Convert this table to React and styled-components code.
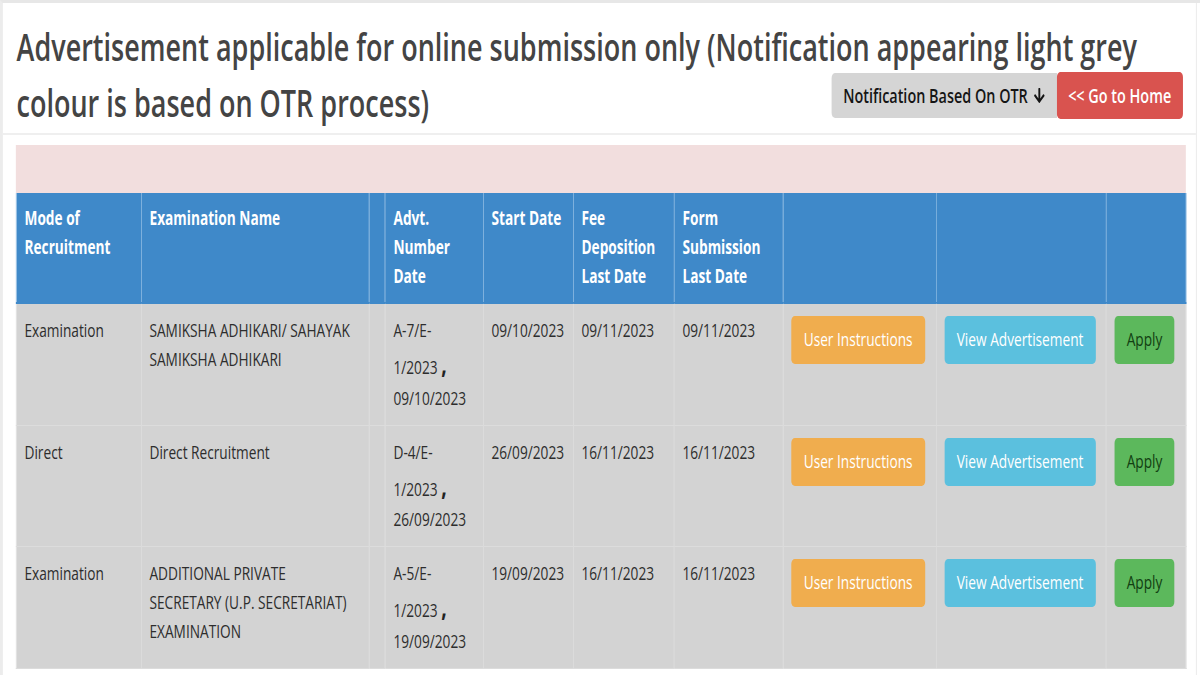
import React from 'react'
import styled, { createGlobalStyle } from 'styled-components'
import { FaArrowDown } from 'react-icons/fa'

// the reference is a horizontally squeezed screenshot, so the page is laid out
// wide and then squeezed with scaleX
const SQUEEZE = 0.72

const GlobalStyle = createGlobalStyle`
  html, body {
    margin: 0;
    padding: 0;
    overflow: hidden;
    background: #fff;
  }
  body {
    font-family: "Open Sans", "Noto Sans", sans-serif;
    color: #333;
  }
  * {
    box-sizing: border-box;
  }
`

const Page = styled.div`
  width: ${1200 / SQUEEZE}px;
  height: 675px;
  transform: scaleX(${SQUEEZE});
  transform-origin: 0 0;
  border-top: 3px solid #e7e7e7;
  border-left: 4px solid #ececec;
  background: #fff;
`

const Panel = styled.div`
  margin-right: 5px;
  border-right: 1px solid #e4e4e4;
  height: 100%;
`

const Heading = styled.h2`
  margin: 0;
  padding: 16px 18px 2px 19px;
  font-size: 37.5px;
  line-height: 56px;
  font-weight: 600;
  color: #444;
  border-bottom: 2px solid #efefef;
  &::after {
    content: "";
    display: block;
    clear: both;
  }
`

const HeadActions = styled.span`
  float: right;
  display: flex;
  margin-top: -2px;
`

const HeadButton = styled.a`
  display: inline-flex;
  align-items: center;
  gap: 7px;
  height: 45px;
  padding: 0 16px;
  font-size: 20px;
  line-height: 29px;
  font-weight: 600;
  text-decoration: none;
  cursor: pointer;
  color: ${p => (p.$danger ? '#fff' : '#151515')};
  background: ${p => (p.$danger ? '#d9534f' : '#d5d5d5')};
  border-radius: ${p => (p.$danger ? '5px' : '5px 0 0 5px')};
  ${p => p.$danger && 'height: 47px; margin-top: -1px;'}
  svg {
    font-size: 17px;
  }
`

const PanelBody = styled.div`
  padding: 10px 14px 0 18px;
`

const Alert = styled.div`
  height: 48px;
  background: #f2dede;
`

const Table = styled.table`
  width: 100%;
  table-layout: fixed;
  border-collapse: collapse;
  font-size: 19px;
  line-height: 29px;
`

const Col = styled.col`
  width: ${p => p.$w}px;
`

const HeadCell = styled.th`
  padding: 11px 11px;
  text-align: left;
  vertical-align: top;
  font-weight: 700;
  color: #fff;
  background: #3f89c9;
  border: 1px solid #8fbbe2;
  border-top: none;
  border-bottom: 2px solid #3f89c9;
`

const Cell = styled.td`
  padding: 12px 11px;
  vertical-align: top;
  color: #2d2d2d;
  background: #d3d3d3;
  border: 1px solid #dcdcdc;
  border-top-color: ${p => (p.$first ? '#3f89c9' : '#dcdcdc')};
`

const Comma = styled.b`
  font-size: 27px;
  line-height: 1.4286;
  color: #222;
`

const ActionButton = styled.a`
  display: inline-block;
  padding: 9px 17px 10px;
  border-radius: 5px;
  font-size: 19px;
  line-height: 29px;
  white-space: nowrap;
  cursor: pointer;
  color: ${p => p.$ink};
  background: ${p => p.$bg};
`

const columns = [173.6, 316.7, 22.2, 136.1, 125, 140.3, 151.4, 212.5, 236.1, 111.1]

const rows = [
  {
    mode: 'Examination',
    name: 'SAMIKSHA ADHIKARI/ SAHAYAK SAMIKSHA ADHIKARI',
    advt: 'A-7/E-1/2023',
    advtDate: '09/10/2023',
    start: '09/10/2023',
    fee: '09/11/2023',
    form: '09/11/2023',
  },
  {
    mode: 'Direct',
    name: 'Direct Recruitment',
    advt: 'D-4/E-1/2023',
    advtDate: '26/09/2023',
    start: '26/09/2023',
    fee: '16/11/2023',
    form: '16/11/2023',
  },
  {
    mode: 'Examination',
    name: 'ADDITIONAL PRIVATE SECRETARY (U.P. SECRETARIAT) EXAMINATION',
    advt: 'A-5/E-1/2023',
    advtDate: '19/09/2023',
    start: '19/09/2023',
    fee: '16/11/2023',
    form: '16/11/2023',
  },
]

export default function App() {
  return (
    <>
      <GlobalStyle />
      <Page>
        <Panel>
          <Heading>
            Advertisement applicable for online submission only (Notification appearing light grey colour is based on OTR process)
            <HeadActions>
              <HeadButton>
                Notification Based On OTR <FaArrowDown />
              </HeadButton>
              <HeadButton $danger>&lt;&lt; Go to Home</HeadButton>
            </HeadActions>
          </Heading>
          <PanelBody>
            <Alert />
            <Table>
              <colgroup>
                {columns.map((w, i) => (
                  <Col key={i} $w={w} />
                ))}
              </colgroup>
              <thead>
                <tr>
                  <HeadCell>Mode of Recruitment</HeadCell>
                  <HeadCell>Examination Name</HeadCell>
                  <HeadCell />
                  <HeadCell>Advt. Number Date</HeadCell>
                  <HeadCell>Start Date</HeadCell>
                  <HeadCell>Fee Deposition Last Date</HeadCell>
                  <HeadCell>Form Submission Last Date</HeadCell>
                  <HeadCell />
                  <HeadCell />
                  <HeadCell />
                </tr>
              </thead>
              <tbody>
                {rows.map((r, i) => (
                  <tr key={i}>
                    <Cell $first={i === 0}>{r.mode}</Cell>
                    <Cell $first={i === 0}>{r.name}</Cell>
                    <Cell $first={i === 0} />
                    <Cell $first={i === 0}>
                      {r.advt} <Comma>,</Comma> {r.advtDate}
                    </Cell>
                    <Cell $first={i === 0}>{r.start}</Cell>
                    <Cell $first={i === 0}>{r.fee}</Cell>
                    <Cell $first={i === 0}>{r.form}</Cell>
                    <Cell $first={i === 0}>
                      <ActionButton $bg="#f0ad4e" $ink="#fff">User Instructions</ActionButton>
                    </Cell>
                    <Cell $first={i === 0}>
                      <ActionButton $bg="#5bc0de" $ink="#fff">View Advertisement</ActionButton>
                    </Cell>
                    <Cell $first={i === 0}>
                      <ActionButton $bg="#5cb85c" $ink="#123f12">Apply</ActionButton>
                    </Cell>
                  </tr>
                ))}
              </tbody>
            </Table>
          </PanelBody>
        </Panel>
      </Page>
    </>
  )
}
